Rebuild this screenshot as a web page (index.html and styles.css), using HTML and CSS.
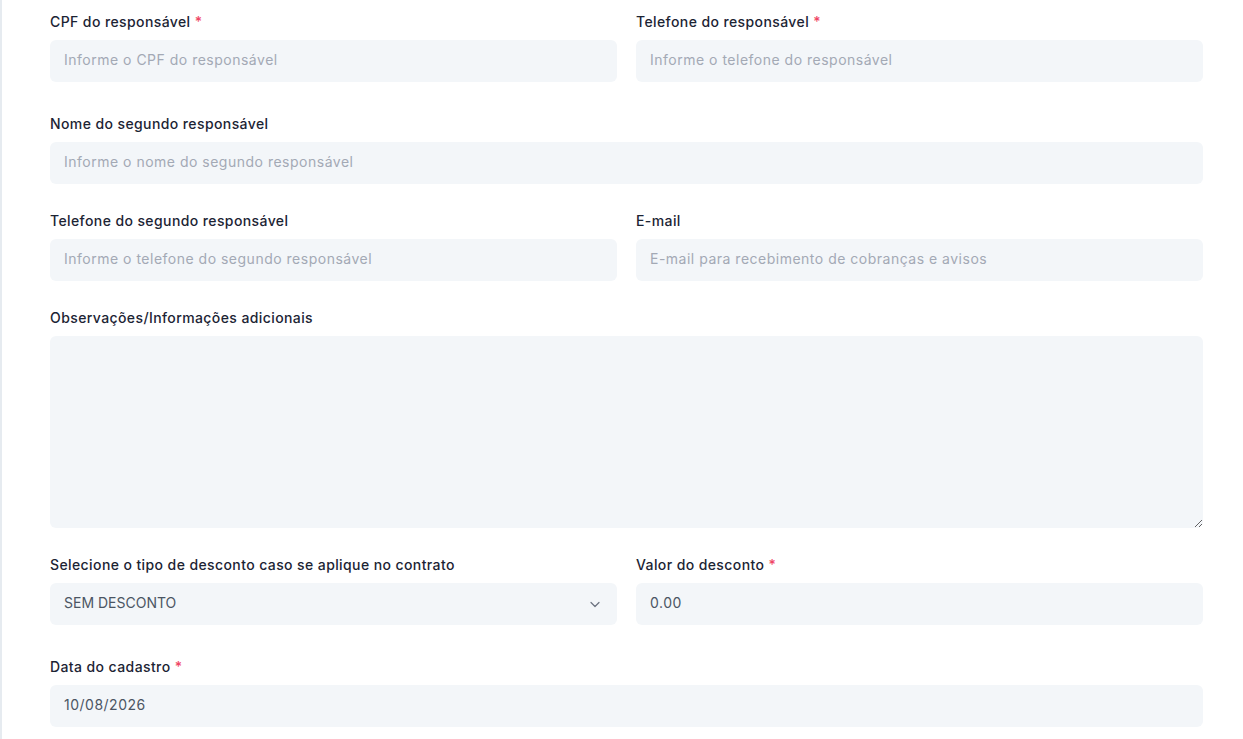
FILE: index.html
```html
<!DOCTYPE html>
<html lang="pt-BR">
<head>
    <meta charset="UTF-8">
    <meta name="viewport" content="width=device-width, initial-scale=1.0">
    <title>Cadastro de aluno</title>
    <link rel="stylesheet" href="styles.css">
</head>
<body>

    <div class="page">
        <form class="form-card">
            <div class="form-row two-cols has-required">
                <div class="field">
                    <label for="cpf">CPF do responsável <span class="req">*</span></label>
                    <input type="text" id="cpf" placeholder="Informe o CPF do responsável">
                </div>
                <div class="field">
                    <label for="telefone">Telefone do responsável <span class="req">*</span></label>
                    <input type="text" id="telefone" placeholder="Informe o telefone do responsável">
                </div>
            </div>

            <div class="form-row">
                <div class="field">
                    <label for="nome2">Nome do segundo responsável</label>
                    <input type="text" id="nome2" placeholder="Informe o nome do segundo responsável">
                </div>
            </div>

            <div class="form-row two-cols">
                <div class="field">
                    <label for="telefone2">Telefone do segundo responsável</label>
                    <input type="text" id="telefone2" placeholder="Informe o telefone do segundo responsável">
                </div>
                <div class="field">
                    <label for="email">E-mail</label>
                    <input type="email" id="email" placeholder="E-mail para recebimento de cobranças e avisos">
                </div>
            </div>

            <div class="form-row">
                <div class="field">
                    <label for="obs">Observações/Informações adicionais</label>
                    <textarea id="obs"></textarea>
                </div>
            </div>

            <div class="form-row two-cols has-required">
                <div class="field">
                    <label for="desconto">Selecione o tipo de desconto caso se aplique no contrato</label>
                    <div class="select-wrap">
                        <select id="desconto">
                            <option>SEM DESCONTO</option>
                            <option>PERCENTUAL</option>
                            <option>VALOR FIXO</option>
                        </select>
                        <svg class="chevron" width="12" height="12" viewBox="0 0 12 12" fill="none">
                            <path d="M2 4.5l4 4 4-4" stroke="#6b7280" stroke-width="1.2" stroke-linecap="round" stroke-linejoin="round"/>
                        </svg>
                    </div>
                </div>
                <div class="field">
                    <label for="valor">Valor do desconto <span class="req">*</span></label>
                    <input type="text" id="valor" value="0.00">
                </div>
            </div>

            <div class="form-row has-required">
                <div class="field">
                    <label for="data">Data do cadastro <span class="req">*</span></label>
                    <input type="text" id="data" value="10/08/2026">
                </div>
            </div>
        </form>
    </div>

</body>
</html>
```

FILE: styles.css
```css
body {
    margin: 0;
    font-family: Inter, "Noto Sans", Arial, sans-serif;
    background-color: #e6ebf0;
    color: #1c2434;
}

.page {
    margin-left: 2px;
    background-color: #fff;
    min-height: 100vh;
}

.form-card {
    padding: 11px 40px 12px 48px;
}

.form-row {
    display: grid;
    grid-template-columns: 1fr;
    margin-bottom: 26px;
}

.form-row.two-cols {
    grid-template-columns: 1fr 1fr;
    column-gap: 19px;
}

.form-row.has-required {
    margin-bottom: 31px;
}

.form-row:last-child {
    margin-bottom: 0;
}

.field label {
    display: block;
    font-size: 14px;
    font-weight: 500;
    line-height: 21px;
    letter-spacing: 0.4px;
    margin-bottom: 8px;
    color: #1c2434;
}

.field .req {
    color: #ef4565;
}

.field input,
.field select,
.field textarea {
    display: block;
    width: 100%;
    box-sizing: border-box;
    height: 42px;
    padding: 0 14px 3px;
    border: none;
    border-radius: 6px;
    background-color: #f3f6f9;
    font-family: inherit;
    font-size: 14px;
    letter-spacing: 0.5px;
    color: #4b5563;
    outline: none;
}

.field input::placeholder {
    color: #a3a9b5;
}

.field textarea {
    height: 192px;
    padding: 10px 14px;
    resize: vertical;
}

.select-wrap {
    position: relative;
}

.field select {
    appearance: none;
    -webkit-appearance: none;
    letter-spacing: 0;
    cursor: pointer;
}

.select-wrap .chevron {
    position: absolute;
    right: 16px;
    top: 15px;
    pointer-events: none;
}
```
